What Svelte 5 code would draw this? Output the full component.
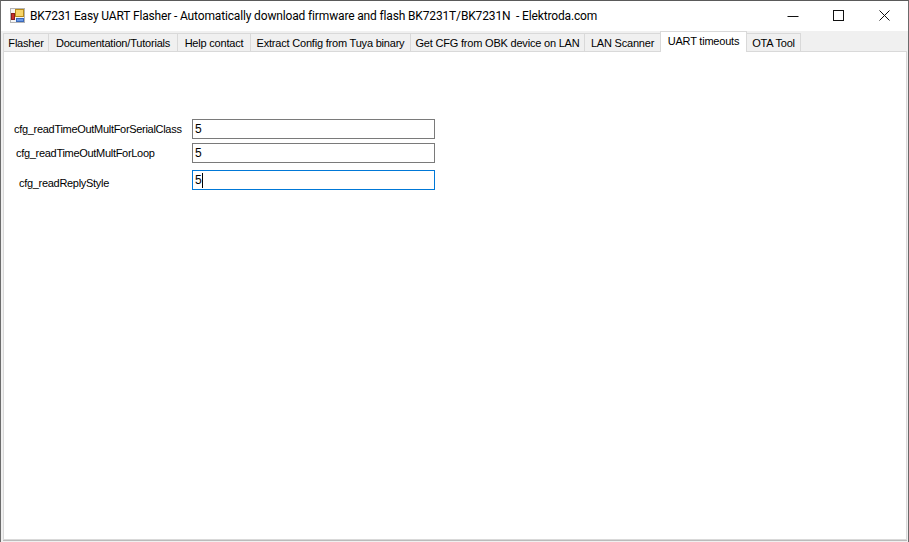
<script>
  const tabs = [
    { label: 'Flasher', w: 46 },
    { label: 'Documentation/Tutorials', w: 129 },
    { label: 'Help contact', w: 73 },
    { label: 'Extract Config from Tuya binary', w: 160 },
    { label: 'Get CFG from OBK device on LAN', w: 174 },
    { label: 'LAN Scanner', w: 76 },
    { label: 'UART timeouts', w: 87, active: true },
    { label: 'OTA Tool', w: 54 }
  ];
  const rows = [
    { label: 'cfg_readTimeOutMultForSerialClass', cls: 'r1' },
    { label: 'cfg_readTimeOutMultForLoop', cls: 'r2' },
    { label: 'cfg_readReplyStyle', cls: 'r3', focus: true }
  ];
</script>

<div class="window">
  <div class="titlebar">
    <svg class="appicon" width="16" height="16" viewBox="0 0 16 16">
      <rect x="0.5" y="0.5" width="14" height="14" fill="#f4f4f4" stroke="#b4b4b4"/>
      <rect x="5.5" y="1.5" width="8" height="7" fill="#f6d468" stroke="#b88a18"/>
      <rect x="1.5" y="5.5" width="3" height="6" fill="#c8302c" stroke="#8a1e1c"/>
      <rect x="6.5" y="10.5" width="7" height="3" fill="#6a9ae8" stroke="#3a68b8"/>
    </svg>
    <span class="title">BK7231 Easy UART Flasher - Automatically download firmware and flash BK7231T/BK7231N  - Elektroda.com</span>
    <div class="controls">
      <svg width="46" height="30" viewBox="0 0 46 30"><path d="M17.5 15.5h11" stroke="#111" fill="none"/></svg>
      <svg width="46" height="30" viewBox="0 0 46 30"><rect x="17.5" y="9.5" width="10" height="10" stroke="#111" fill="none"/></svg>
      <svg width="46" height="30" viewBox="0 0 46 30"><path d="M17.5 9.5l10 10M27.5 9.5l-10 10" stroke="#111" fill="none"/></svg>
    </div>
  </div>
  <div class="tabstrip">
    {#each tabs as t}
      <div class="tab" class:active={t.active} style="width:{t.w}px">{t.label}</div>
    {/each}
  </div>
  <div class="page">
    <div class="form">
      {#each rows as r}
        <div class="row {r.cls}">
          <span class="lbl">{r.label}</span>
          <div class="input" class:focus={r.focus}>5{#if r.focus}<i class="caret"></i>{/if}</div>
        </div>
      {/each}
    </div>
  </div>
</div>

<style>
  :global(body) { margin: 0; background: #fff; }
  .window {
    width: 909px; height: 542px; box-sizing: border-box;
    border: 1px solid #6b6b6b; border-top-color: #5a5a5a; border-bottom: 0;
    display: flex; flex-direction: column; background: #f0f0f0;
    font-family: "Liberation Sans", Arial, sans-serif; font-size: 11px; color: #000;
    overflow: hidden;
  }
  .titlebar { height: 30px; background: #fff; display: flex; align-items: center; padding-left: 9px; flex: none; }
  .appicon { flex: none; margin-right: 4px; }
  .title { font-family: "Roboto", sans-serif; font-size: 12px; letter-spacing: -0.15px; white-space: pre; flex: 1; color: #000; }
  .controls { display: flex; flex: none; }
  .controls svg { display: block; }
  .tabstrip { height: 20px; flex: none; padding-left: 2px; display: flex; align-items: flex-end; position: relative; z-index: 1; }
  .tab {
    height: 18px; box-sizing: border-box; flex: none; text-align: center; line-height: 19px; white-space: nowrap;
    letter-spacing: -0.2px;
    border: 1px solid #d9d9d9; border-bottom: 0; border-left-width: 0; background: #f0f0f0;
  }
  .tab:first-child { border-left-width: 1px; }
  .tab.active { background: #fff; line-height: 19px; margin-bottom: -1px; height: 21px; padding-bottom: 2px; border-left-width: 1px; margin-left: -1px; }
  .page { flex: 1; background: #fff; margin: 0 1px 2px 2px; border: 1px solid #d9d9d9; box-shadow: 0 1px 0 #bbb; min-height: 0; }
  .form { padding-top: 67px; }
  .row { display: flex; align-items: center; height: 20px; position: relative; }
  .row.r2 { margin-top: 4px; }
  .row.r3 { margin-top: 7px; }
  .lbl { white-space: nowrap; width: 188px; flex: none; box-sizing: border-box; letter-spacing: -0.3px; }
  .r1 .lbl { padding-left: 10px; }
  .r2 .lbl { padding-left: 12px; }
  .r3 .lbl { padding-left: 15px; padding-top: 6px; }
  .input {
    width: 243px; height: 20px; box-sizing: border-box; border: 1px solid #7a7a7a; background: #fff;
    font-size: 12px; line-height: 18px; padding-left: 2px; display: flex; align-items: center;
  }
  .input.focus { border-color: #0078d7; }
  .caret { display: block; width: 1px; height: 15px; background: #000; }
</style>
